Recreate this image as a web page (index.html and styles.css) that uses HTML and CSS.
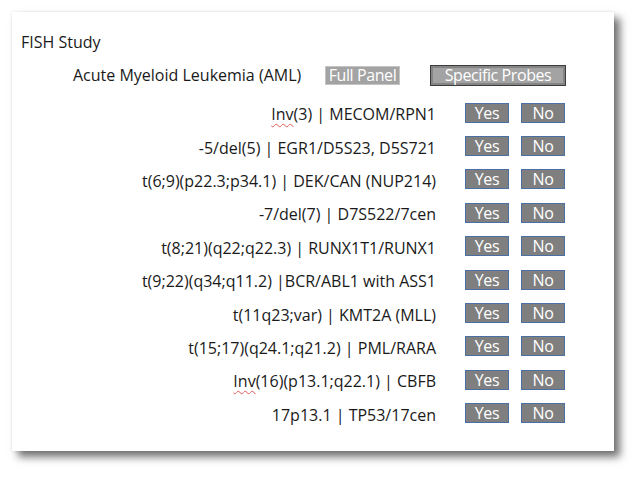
FILE: index.html
```
<!DOCTYPE html>
<html lang="en">
<head>
    <meta charset="UTF-8">
    <meta name="viewport" content="width=device-width, initial-scale=1.0">
    <title>FISH Study</title>
    <link rel="stylesheet" href="styles.css">
</head>
<body>
    <!-- Slide card -->
    <div class="card">
        <div class="title">FISH Study</div>

        <!-- Panel selector -->
        <div class="panel-row">
            <span class="panel-name">Acute Myeloid Leukemia (AML)</span>
            <span class="btn btn-full">Full Panel</span>
            <span class="btn btn-specific">Specific Probes</span>
        </div>

        <!-- Probe list -->
        <div class="probes">
            <div class="probe-row">
                <span class="probe-name"><span class="flag">Inv</span>(3) | MECOM/RPN1</span>
                <span class="choice">Yes</span><span class="choice">No</span>
            </div>
            <div class="probe-row">
                <span class="probe-name">-5/del(5) | EGR1/D5S23, D5S721</span>
                <span class="choice">Yes</span><span class="choice">No</span>
            </div>
            <div class="probe-row">
                <span class="probe-name">t(6;9)(p22.3;p34.1) | DEK/CAN (NUP214)</span>
                <span class="choice">Yes</span><span class="choice">No</span>
            </div>
            <div class="probe-row">
                <span class="probe-name">-7/del(7) | D7S522/7cen</span>
                <span class="choice">Yes</span><span class="choice">No</span>
            </div>
            <div class="probe-row">
                <span class="probe-name">t(8;21)(q22;q22.3) | RUNX1T1/RUNX1</span>
                <span class="choice">Yes</span><span class="choice">No</span>
            </div>
            <div class="probe-row">
                <span class="probe-name">t(9;22)(q34;q11.2) |BCR/ABL1 with ASS1</span>
                <span class="choice">Yes</span><span class="choice">No</span>
            </div>
            <div class="probe-row">
                <span class="probe-name">t(11q23;var) | KMT2A (MLL)</span>
                <span class="choice">Yes</span><span class="choice">No</span>
            </div>
            <div class="probe-row">
                <span class="probe-name">t(15;17)(q24.1;q21.2) | PML/RARA</span>
                <span class="choice">Yes</span><span class="choice">No</span>
            </div>
            <div class="probe-row">
                <span class="probe-name"><span class="flag">Inv</span>(16)(p13.1;q22.1) | CBFB</span>
                <span class="choice">Yes</span><span class="choice">No</span>
            </div>
            <div class="probe-row">
                <span class="probe-name">17p13.1 | TP53/17cen</span>
                <span class="choice">Yes</span><span class="choice">No</span>
            </div>
        </div>
    </div>
</body>
</html>
```

FILE: styles.css
```
body {
    margin: 0;
    padding: 12px 0 26px 12px;
    background-color: #ffffff;
    font-family: "Open Sans", "Liberation Sans", sans-serif;
    color: #1a1a1a;
}

/* Slide card with soft drop shadow */
.card {
    box-sizing: border-box;
    width: 602px;
    height: 439px;
    padding: 20px 0 0 9px;
    background-color: #ffffff;
    box-shadow: 0 0 3px rgba(0, 0, 0, 0.1), 6px 6px 8px rgba(0, 0, 0, 0.55);
    font-size: 16px;
}

.title {
    line-height: 20px;
}

/* Panel selector row */
.panel-row {
    display: flex;
    align-items: center;
    height: 22px;
    margin-top: 12px;
    padding-left: 52px;
}

.panel-name {
    width: 252px;
}

.btn {
    box-sizing: border-box;
    display: flex;
    align-items: center;
    justify-content: center;
    color: #ffffff;
    background-color: #a3a3a3;
    font-size: 16px;
    letter-spacing: -0.4px;
}

.btn-full {
    width: 75px;
    height: 19px;
    border: 1px solid #c4c4c4;
}

.btn-specific {
    width: 136px;
    height: 21px;
    margin-left: 30px;
    border: 1px solid #3c3c3c;
    box-shadow: inset 0 0 0 2px #858585;
}

/* Probe rows */
.probes {
    margin-top: 10px;
}

.probe-row {
    display: flex;
    align-items: center;
    height: 33.4px;
}

.probe-name {
    width: 415px;
    padding-top: 3px;
    text-align: right;
}

.flag {
    text-decoration: underline wavy #e05a5a;
    text-decoration-thickness: 1px;
    text-underline-offset: 3px;
}

.choice {
    box-sizing: border-box;
    display: flex;
    align-items: center;
    justify-content: center;
    width: 44px;
    height: 20px;
    margin-left: 12px;
    color: #ffffff;
    background-color: #7f7f7f;
    border: 1px solid #4a6fa5;
    font-size: 16px;
    letter-spacing: -0.3px;
}

.probe-name + .choice {
    margin-left: 29px;
}
```
